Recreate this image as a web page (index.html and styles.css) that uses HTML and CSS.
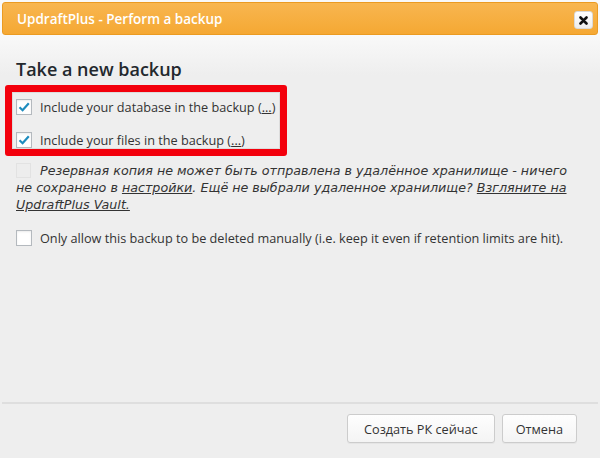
FILE: index.html
```html
<!DOCTYPE html>
<html lang="en">
<head>
<meta charset="utf-8">
<title>UpdraftPlus - Perform a backup</title>
<link rel="stylesheet" href="styles.css">
</head>
<body>
<div class="dialog">
  <div class="titlebar">
    <span class="title">UpdraftPlus - Perform a backup</span>
    <button class="close" type="button" aria-label="Close">
      <svg width="9" height="9" viewBox="0 0 9 9"><path d="M1.5 1.5 L7.5 7.5 M7.5 1.5 L1.5 7.5" stroke="#111" stroke-width="2.6" stroke-linecap="round"/></svg>
    </button>
  </div>
  <div class="content">
    <h2 class="heading">Take a new backup</h2>
    <div class="highlight">
      <div class="highlight-inner">
        <label class="row">
          <span class="cb checked"><svg width="14" height="14" viewBox="0 0 14 14"><path d="M2.5 7.2 L5.6 10.2 L11.8 3.2" fill="none" stroke="#1e8cbe" stroke-width="2.2"/></svg></span>
          <span>Include your database in the backup (<a href="#">...</a>)</span>
        </label>
        <label class="row row-second">
          <span class="cb checked"><svg width="14" height="14" viewBox="0 0 14 14"><path d="M2.5 7.2 L5.6 10.2 L11.8 3.2" fill="none" stroke="#1e8cbe" stroke-width="2.2"/></svg></span>
          <span>Include your files in the backup (<a href="#">...</a>)</span>
        </label>
      </div>
    </div>
    <p class="note"><span class="cb disabled"></span><em>Резервная копия не может быть отправлена в удалённое хранилище - ничего не сохранено в <a href="#">настройки</a>. Ещё не выбрали удаленное хранилище? <a href="#">Взгляните на UpdraftPlus Vault.</a></em></p>
    <label class="row row-last">
      <span class="cb"></span>
      <span>Only allow this backup to be deleted manually (i.e. keep it even if retention limits are hit).</span>
    </label>
  </div>
  <div class="buttonpane">
    <button class="btn" type="button">Создать РК сейчас</button>
    <button class="btn" type="button">Отмена</button>
  </div>
</div>
</body>
</html>
```
FILE: styles.css
```css
* { box-sizing: border-box; }
html, body { margin: 0; padding: 0; }
body {
  background: #eeeeee;
  font-family: "Open Sans", "Noto Sans", sans-serif;
  font-size: 12.7px;
  color: #333;
}
.dialog {
  width: 600px;
  height: 458px;
  display: flex;
  flex-direction: column;
  background: linear-gradient(#f9f9f9 35px, #eeeeee 75px);
}
.titlebar {
  margin: 2px 2px 0;
  height: 33px;
  border: 1px solid #eb9b22;
  border-radius: 3px;
  background: linear-gradient(#f8b650, #f5a833);
  display: flex;
  align-items: center;
  justify-content: space-between;
  padding: 0 4px 0 14px;
}
.title {
  color: #fff;
  font-weight: 600;
  font-size: 13.5px;
}
.close {
  width: 19px;
  height: 18px;
  padding: 0;
  border: 1px solid #d9d9d9;
  border-radius: 3px;
  background: linear-gradient(#ffffff, #ededed);
  display: flex;
  align-items: center;
  justify-content: center;
  margin-top: 3px;
}
.content {
  flex: 1;
  padding: 0 16px;
}
.heading {
  margin: 22px 0 0;
  font-size: 18px;
  line-height: 24px;
  font-weight: 600;
  color: #23282d;
}
.highlight {
  margin: 4px 0 0 -11px;
  width: fit-content;
  border: 7px solid #f3000c;
  border-radius: 3px;
}
.highlight-inner {
  border: 1px solid #dcdcdc;
  padding: 6px 4px 0 3px;
}
.row {
  display: flex;
  align-items: center;
  gap: 8px;
  line-height: 16px;
  color: #333;
}
.row-second { margin-top: 17px; }
.row-last { margin-top: 17px; }
.cb {
  width: 16px;
  height: 16px;
  flex: none;
  border: 1px solid #b4b9be;
  background: #fff;
  display: inline-flex;
  align-items: center;
  justify-content: center;
  box-shadow: inset 0 1px 2px rgba(0,0,0,0.08);
}
.cb.disabled {
  display: inline-block;
  vertical-align: -3px;
  border-color: #e2e2e2;
  background: #ededed;
  box-shadow: none;
  width: 15px;
  height: 15px;
  margin-right: 9px;
}
a { color: #333; }
.note {
  margin: 6px 0 0;
  font-family: "DejaVu Sans", "Open Sans", sans-serif;
  font-size: 12.7px;
  line-height: 17px;
  color: #333;
}
.note em {
  font-style: oblique;
}
.buttonpane {
  border-top: 2px solid #dedede;
  margin: 0 2px;
  height: 56px;
  display: flex;
  justify-content: flex-end;
  align-items: flex-start;
  gap: 7px;
  padding: 10px 21px 0 0;
}
.btn {
  height: 29px;
  padding: 0 16px;
  font-family: inherit;
  font-size: 12.7px;
  color: #333;
  border: 1px solid #cccccc;
  border-radius: 3px;
  background: linear-gradient(#fefefe, #f4f4f4);
  box-shadow: 0 1px 0 #e5e5e5;
}
.btn:last-child { padding: 0 13px; }
```
